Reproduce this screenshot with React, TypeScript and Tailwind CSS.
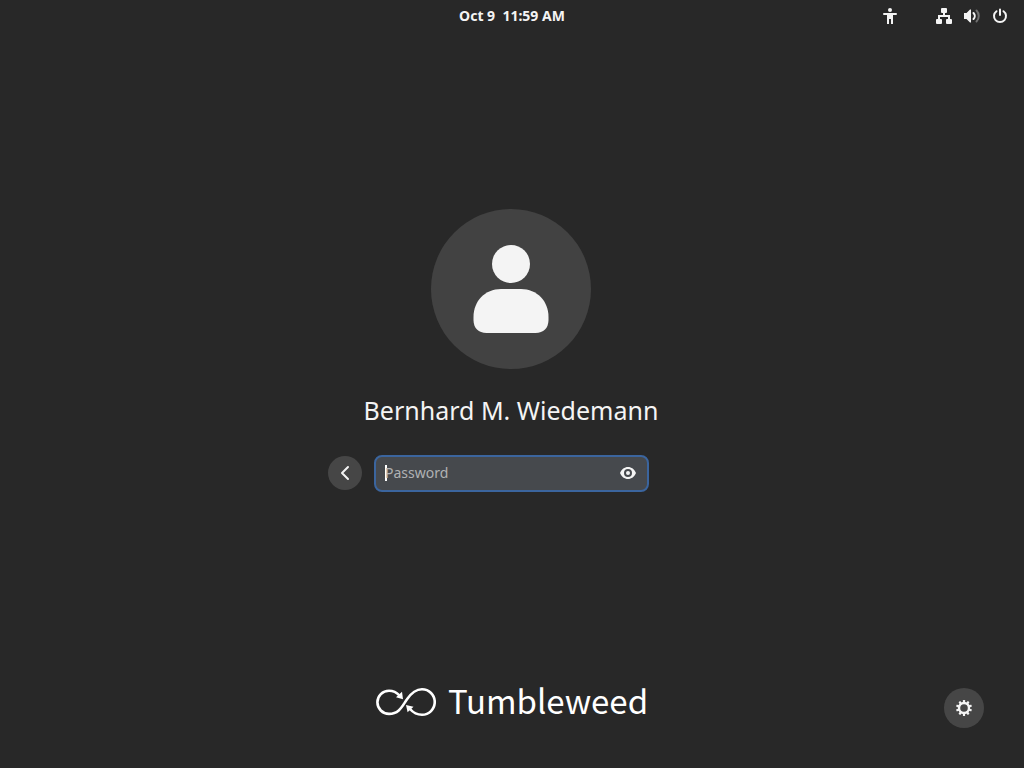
import React from "react";

const GEAR_ANGLES = [0, 36, 72, 108, 144, 180, 216, 252, 288, 324];

function AccessibilityIcon() {
  return (
    <svg className="size-4" viewBox="0 0 16 16" fill="currentColor" aria-hidden="true">
      <circle cx="8" cy="2" r="2" />
      <path d="M2 5h12a1 1 0 0 1 0 2h-3v9H9v-5H7v5H5V7H2a1 1 0 0 1 0-2z" />
    </svg>
  );
}

function NetworkIcon() {
  return (
    <svg className="size-4" viewBox="0 0 16 16" fill="currentColor" aria-hidden="true">
      <rect x="5" y="0" width="6" height="5" rx="1" />
      <rect x="0" y="11" width="6" height="5" rx="1" />
      <rect x="10" y="11" width="6" height="5" rx="1" />
      <path d="M7 4h2v3h5v5h-2V9H4v3H2V7h5z" />
    </svg>
  );
}

function VolumeIcon() {
  return (
    <svg className="size-4" viewBox="0 0 16 16" fill="none" aria-hidden="true">
      <path d="M0 5h2.500L6 1.500h1v13H6L2.500 11H0z" fill="currentColor" />
      <path d="M9.500 5c1.700 1.700 1.700 4.300 0 6" stroke="currentColor" strokeWidth="2" strokeLinecap="round" />
      <path d="M12.500 2.500c3 3 3 8 0 11" stroke="currentColor" strokeWidth="2" strokeLinecap="round" opacity="0.35" />
    </svg>
  );
}

function PowerIcon() {
  return (
    <svg className="size-4" viewBox="0 0 16 16" fill="none" stroke="currentColor" strokeWidth="2" strokeLinecap="round" aria-hidden="true">
      <path d="M8 1.500v5.500M4.500 3.200a6 6 0 1 0 7 0" />
    </svg>
  );
}

function AvatarIcon() {
  return (
    <svg className="h-22 w-19" viewBox="0 0 76 88" fill="#f4f4f4" aria-hidden="true">
      <circle cx="38" cy="19" r="19" />
      <path d="M28 44h20c16 0 27.500 12 27.500 28v3c0 8-5 13-13 13h-49c-8 0-13-5-13-13v-3c0-16 11.500-28 27.500-28z" />
    </svg>
  );
}

function GearIcon() {
  return (
    <svg className="size-4" viewBox="0 0 16 16" aria-hidden="true">
      <circle cx="8" cy="8" r="5" fill="none" stroke="currentColor" strokeWidth="2.400" />
      {GEAR_ANGLES.map((angle) => (
        <rect key={angle} x="6.900" y="0" width="2.200" height="3" rx="0.500" fill="currentColor" transform={`rotate(${angle} 8 8)`} />
      ))}
    </svg>
  );
}

function TumbleweedLogo() {
  return (
    <svg className="h-[30px] w-[60px]" viewBox="0 0 60 30" fill="none" aria-hidden="true">
      <path
        d="M23.500 8.500C20.500 5.200 17 3.700 13 3.700A11.600 11.600 0 0 0 13 26.900C23.500 26.900 26.500 18.500 31 12.300C35.500 5.800 39.500 2.300 46 2.300A12.750 12.750 0 0 1 46 27.800C41.500 27.800 37.500 26 34 22"
        stroke="currentColor"
        strokeWidth="2.600"
      />
      <path d="M20 10.300L26 4.800L27 12.200zM30 18L37.500 19.700L31.600 25.300z" fill="currentColor" />
    </svg>
  );
}

export default function App() {
  return (
    <div className="flex min-h-screen flex-col bg-[#282828] font-['Noto_Sans',sans-serif] text-[#f4f4f4]">
      <header className="grid h-8 grid-cols-[1fr_auto_1fr] items-center px-4">
        <time className="col-start-2 text-sm font-bold whitespace-pre">Oct 9  11:59 AM</time>
        <div className="flex items-center justify-end">
          <button type="button" aria-label="Accessibility" className="mr-[38px]">
            <AccessibilityIcon />
          </button>
          <button type="button" aria-label="System menu" className="flex gap-3">
            <NetworkIcon />
            <VolumeIcon />
            <PowerIcon />
          </button>
        </div>
      </header>

      <main className="flex flex-1 flex-col items-center justify-center pr-0.5">
        <div className="flex size-40 items-center justify-center rounded-full bg-[#424242]">
          <AvatarIcon />
        </div>
        <h1 className="mt-6 text-[25px] leading-[34px]">Bernhard M. Wiedemann</h1>
        <form className="mt-7 flex items-center gap-3" onSubmit={(event) => event.preventDefault()}>
          <button type="button" aria-label="Back" className="flex size-[34px] items-center justify-center rounded-full bg-[#464646]">
            <svg className="size-4" viewBox="0 0 16 16" fill="none" stroke="currentColor" strokeWidth="2" strokeLinecap="round" strokeLinejoin="round" aria-hidden="true">
              <path d="M11 2L5 8l6 6" />
            </svg>
          </button>
          <div className="flex h-[37px] w-[275px] items-center rounded-lg border-2 border-[#3b659e] bg-[#46494d] pr-[11px] pl-[9px]">
            <span className="-mr-0.5 h-4 w-0.5 bg-white" />
            <input
              type="password"
              aria-label="Password"
              placeholder="Password"
              className="h-8 min-w-0 flex-1 bg-transparent text-sm leading-8 caret-transparent outline-none placeholder:text-[#b0b2b4]"
            />
            <button type="button" aria-label="Show password">
              <svg className="size-4" viewBox="0 0 16 16" aria-hidden="true">
                <path
                  fillRule="evenodd"
                  fill="currentColor"
                  d="M8 2C4.500 2 1.500 4.300 0 8c1.500 3.700 4.500 6 8 6s6.500-2.300 8-6c-1.500-3.700-4.500-6-8-6zm0 2a4 4 0 1 1 0 8 4 4 0 0 1 0-8z"
                />
                <circle cx="8" cy="8" r="2" fill="currentColor" />
              </svg>
            </button>
          </div>
          <span className="w-[33px]" />
        </form>
      </main>

      <footer className="grid grid-cols-[1fr_auto_1fr] items-start px-10 pt-5 pb-10">
        <div className="col-start-2 flex h-7 items-center gap-3 font-['Noto_Sans_CJK_SC',sans-serif] text-white">
          <TumbleweedLogo />
          <span className="self-start text-[33px] leading-6">Tumbleweed</span>
        </div>
        <button type="button" aria-label="Session options" className="flex size-10 items-center justify-center justify-self-end rounded-full bg-[#464646]">
          <GearIcon />
        </button>
      </footer>
    </div>
  );
}
